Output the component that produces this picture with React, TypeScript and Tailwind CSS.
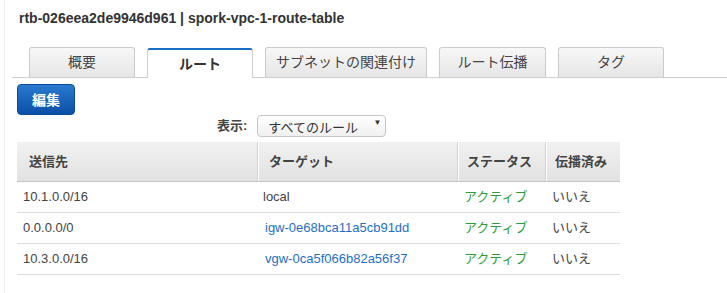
import React from "react";

const F = { fontFamily: '"Liberation Sans", "Noto Sans CJK JP", sans-serif' };

const tabs = [
  { label: "概要", w: "w-[106px]" },
  { label: "ルート", w: "w-[106px]", active: true },
  { label: "サブネットの関連付け", w: "w-[162px]" },
  { label: "ルート伝播", w: "w-[107px]" },
  { label: "タグ", w: "w-[106px]" },
];

const rows = [
  { dest: "10.1.0.0/16", target: "local", link: false },
  { dest: "0.0.0.0/0", target: "igw-0e68bca11a5cb91dd", link: true },
  { dest: "10.3.0.0/16", target: "vgw-0ca5f066b82a56f37", link: true },
];

export default function App() {
  return (
    <div className="w-[727px] h-[293px] bg-white overflow-hidden" style={F}>
      <div className="ml-[4px] h-full border-l border-[#ececec]">
        <div className="pl-[14px] pt-[9px] text-[14px] leading-[18px] font-bold text-[#333]">
          rtb-026eea2de9946d961 | spork-vpc-1-route-table
        </div>

        <div className="ml-[7px] mt-[21px] flex items-end gap-[12px] pl-[17px] border-b border-[#cfcfcf] h-[30px]">
          {tabs.map((t) =>
            t.active ? (
              <div
                key={t.label}
                className={`${t.w} h-[30px] -mb-px flex items-center justify-center bg-white border border-b-0 border-[#cfcfcf] border-t-[2px] border-t-[#1a6ec4] rounded-t-[3px] text-[14px] font-bold text-[#333]`}
              >
                {t.label}
              </div>
            ) : (
              <div
                key={t.label}
                className={`${t.w} h-[30px] flex items-center justify-center bg-gradient-to-b from-[#f7f7f7] to-[#e6e6e6] border border-b-0 border-[#cbcbcb] rounded-t-[3px] text-[14px] text-[#444]`}
              >
                {t.label}
              </div>
            )
          )}
        </div>

        <div className="pl-[12px] mt-[6px]">
          <button className="w-[58px] h-[31px] rounded-[4px] bg-gradient-to-b from-[#2a7ad0] to-[#0b4fa6] border border-[#0a4a9c] text-white font-bold text-[14px] leading-none flex items-center justify-center">
            編集
          </button>
        </div>

        <div className="flex items-center h-[21px] pl-[212px]">
          <span className="text-[13px] font-bold text-[#444] mr-[10px] mt-[1px]">表示:</span>
          <div className="relative w-[129px] h-[22px] rounded-[4px] border border-[#c6c6c6] bg-gradient-to-b from-white to-[#f0f0f0] text-[13px] text-[#333]">
            <span className="absolute left-[10px] top-[3px] leading-[18px]">すべてのルール</span>
            <span className="absolute right-[4px] top-[1px] text-[8px] leading-[12px] text-[#333]">▼</span>
          </div>
        </div>

        <div className="pl-[12px] mt-[6px]">
          <div className="w-[603px]">
            <div className="flex h-[40px] bg-gradient-to-b from-[#f1f1f1] to-[#e2e2e2] border-b border-[#c4c4c4] text-[13px] font-bold text-[#444]">
              <div className="w-[240px] flex items-center pl-[12px]">送信先</div>
              <div className="w-[200px] flex items-center pl-[11px] border-l border-[#d2d2d2] shadow-[inset_1px_0_0_#ffffff]">ターゲット</div>
              <div className="w-[88px] flex items-center pl-[9px] border-l border-[#d2d2d2] shadow-[inset_1px_0_0_#ffffff]">ステータス</div>
              <div className="w-[75px] flex items-center pl-[9px] border-l border-[#d2d2d2] shadow-[inset_1px_0_0_#ffffff]">伝播済み</div>
            </div>
            {rows.map((r) => (
              <div key={r.dest} className="flex h-[31px] border-b border-[#dddddd] text-[13px] text-[#444]">
                <div className="w-[240px] flex items-center pl-[6px]">{r.dest}</div>
                <div className={`w-[200px] flex items-center ${r.link ? "pl-[8px] text-[#1f6fc5]" : "pl-[6px]"}`}>
                  {r.target}
                </div>
                <div className="w-[88px] flex items-center pl-[7px] text-[#2e9c3a]">アクティブ</div>
                <div className="w-[75px] flex items-center pl-[7px]">いいえ</div>
              </div>
            ))}
          </div>
        </div>
      </div>
    </div>
  );
}
